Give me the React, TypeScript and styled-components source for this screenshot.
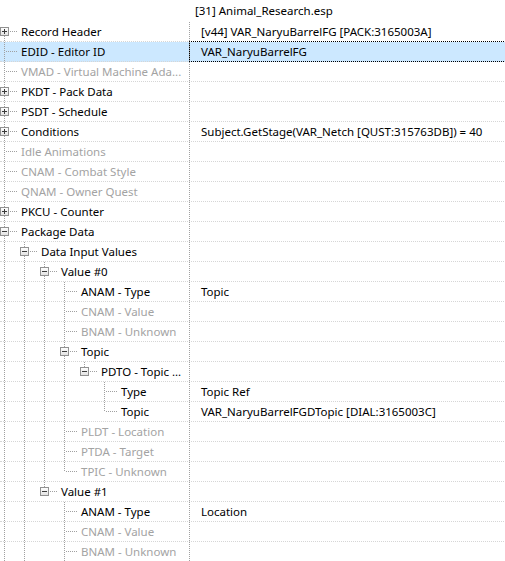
import React from 'react'
import styled, { createGlobalStyle } from 'styled-components'

const GlobalStyle = createGlobalStyle`
  html, body {
    margin: 0;
    padding: 0;
    background: #fff;
    overflow: hidden;
  }
  body {
    font: 11.5px 'Noto Sans', 'Segoe UI', sans-serif;
    color: #000;
  }
`

type Item = {
  label: string
  value?: string
  level: number
  state?: 'open' | 'closed'
  dim?: boolean
  selected?: boolean
}

// flat list of the record tree, in display order
const items: Item[] = [
  { label: 'Record Header', value: '[v44] VAR_NaryuBarrelFG [PACK:3165003A]', level: 0, state: 'closed' },
  { label: 'EDID - Editor ID', value: 'VAR_NaryuBarrelFG', level: 0, selected: true },
  { label: 'VMAD - Virtual Machine Ada...', level: 0, dim: true },
  { label: 'PKDT - Pack Data', level: 0, state: 'closed' },
  { label: 'PSDT - Schedule', level: 0, state: 'closed' },
  { label: 'Conditions', value: 'Subject.GetStage(VAR_Netch [QUST:315763DB]) = 40', level: 0, state: 'closed' },
  { label: 'Idle Animations', level: 0, dim: true },
  { label: 'CNAM - Combat Style', level: 0, dim: true },
  { label: 'QNAM - Owner Quest', level: 0, dim: true },
  { label: 'PKCU - Counter', level: 0, state: 'closed' },
  { label: 'Package Data', level: 0, state: 'open' },
  { label: 'Data Input Values', level: 1, state: 'open' },
  { label: 'Value #0', level: 2, state: 'open' },
  { label: 'ANAM - Type', value: 'Topic', level: 3 },
  { label: 'CNAM - Value', level: 3, dim: true },
  { label: 'BNAM - Unknown', level: 3, dim: true },
  { label: 'Topic', level: 3, state: 'open' },
  { label: 'PDTO - Topic ...', level: 4, state: 'open' },
  { label: 'Type', value: 'Topic Ref', level: 5 },
  { label: 'Topic', value: 'VAR_NaryuBarrelFGDTopic [DIAL:3165003C]', level: 5 },
  { label: 'PLDT - Location', level: 3, dim: true },
  { label: 'PTDA - Target', level: 3, dim: true },
  { label: 'TPIC - Unknown', level: 3, dim: true },
  { label: 'Value #1', level: 2, state: 'open' },
  { label: 'ANAM - Type', value: 'Location', level: 3 },
  { label: 'CNAM - Value', level: 3, dim: true },
  { label: 'BNAM - Unknown', level: 3, dim: true },
  { label: 'Topic', level: 3, dim: true },
  { label: 'PLDT - Location', level: 3, state: 'closed' },
  { label: 'PTDA - Target', level: 3, dim: true },
  { label: 'TPIC - Unknown', level: 3, dim: true },
  { label: 'Data Inputs', level: 1, state: 'closed' },
  { label: 'XNAM - Marker', level: 0 },
  { label: 'Procedure Tree', level: 0, state: 'closed' },
  { label: 'OnBegin', level: 0, state: 'closed' },
  { label: 'OnEnd', level: 0, state: 'closed' },
  { label: 'OnChange', level: 0, state: 'closed' },
]

const hasNext = (i: number) => {
  for (let j = i + 1; j < items.length; j++) {
    if (items[j].level < items[i].level) return false
    if (items[j].level === items[i].level) return true
  }
  return false
}

const ancestorAt = (i: number, level: number) => {
  for (let j = i - 1; j >= 0; j--) {
    if (items[j].level === level) return j
  }
  return -1
}

const LINE = '#a0a0a0'

const Tree = styled.div`
  min-width: 540px;
  user-select: none;
`

const HeaderRow = styled.div`
  display: flex;
  height: 22px;
  line-height: 21px;
`

const HeaderSpacer = styled.div`
  width: 189px;
  flex: none;
`

const HeaderTitle = styled.div`
  padding-left: 6px;
  white-space: nowrap;
`

const Row = styled.div<{ $selected?: boolean }>`
  display: flex;
  height: 20px;
  box-sizing: border-box;
  border-bottom: 1px dotted #d6d6d6;
  background: ${(p) => (p.$selected ? '#cce8ff' : 'transparent')};
`

const NameCell = styled.div`
  width: 189px;
  flex: none;
  display: flex;
  align-items: flex-start;
  white-space: nowrap;
  overflow: visible;
`

const Label = styled.span<{ $dim?: boolean }>`
  padding-left: 1px;
  line-height: 19px;
  color: ${(p) => (p.$dim ? '#a3a3a3' : '#000')};
`

const ValueCell = styled.div<{ $focused?: boolean }>`
  position: relative;
  flex: 1;
  border-left: 1px dotted ${LINE};
  padding-left: 11px;
  line-height: 19px;
  white-space: nowrap;
  &::after {
    content: '';
    display: ${(p) => (p.$focused ? 'block' : 'none')};
    position: absolute;
    top: -1px;
    bottom: -1px;
    left: -1px;
    right: 0;
    border: 1px dotted #000;
  }
`

const Guides = styled.svg`
  flex: none;
  height: 19px;
  overflow: visible;
  display: block;
`

function VLine({ x, y1, y2 }: { x: number; y1: number; y2: number }) {
  return (
    <line
      x1={x}
      x2={x}
      y1={y1}
      y2={y2}
      stroke={LINE}
      strokeDasharray="1 1"
      strokeDashoffset={y1 % 2}
    />
  )
}

function TreeLines({ index }: { index: number }) {
  const item = items[index]
  const L = item.level
  const cx = (k: number) => 20 * k + 4.5
  const boxed = !!item.state
  const next = hasNext(index)
  const parts: React.ReactNode[] = []

  for (let k = 0; k < L; k++) {
    if (hasNext(ancestorAt(index, k))) parts.push(<VLine key={'a' + k} x={cx(k)} y1={0} y2={20} />)
  }
  if (index > 0) parts.push(<VLine key="top" x={cx(L)} y1={0} y2={boxed ? 5 : 10} />)
  if (next) parts.push(<VLine key="bot" x={cx(L)} y1={boxed ? 14 : 10} y2={20} />)

  const hx = 20 * L + (boxed ? 9 : 5)
  parts.push(
    <line
      key="h"
      x1={hx}
      x2={20 * L + 17}
      y1={9.5}
      y2={9.5}
      stroke={LINE}
      strokeDasharray="1 1"
      strokeDashoffset={hx % 2}
    />
  )

  if (boxed) {
    const bx = 20 * L
    parts.push(
      <g key="box">
        <rect x={bx + 0.5} y={5.5} width={8} height={8} fill="url(#btn)" stroke="#919191" />
        <line x1={bx + 2} x2={bx + 7} y1={9.5} y2={9.5} stroke="#3b3b3b" />
        {item.state === 'closed' && <line x1={bx + 4.5} x2={bx + 4.5} y1={7} y2={12} stroke="#3b3b3b" />}
      </g>
    )
  }

  return (
    <Guides width={20 * L + 20} height={19}>
      {parts}
    </Guides>
  )
}

export default function App() {
  return (
    <>
      <GlobalStyle />
      <svg width={0} height={0} style={{ position: 'absolute' }}>
        <defs>
          <linearGradient id="btn" x1="0" y1="0" x2="0" y2="1">
            <stop offset="0" stopColor="#ffffff" />
            <stop offset="1" stopColor="#e2e2e2" />
          </linearGradient>
        </defs>
      </svg>
      <Tree>
        <HeaderRow>
          <HeaderSpacer />
          <HeaderTitle>[31] Animal_Research.esp</HeaderTitle>
        </HeaderRow>
        {items.map((item, i) => (
          <Row key={i} $selected={item.selected}>
            <NameCell>
              <TreeLines index={i} />
              <Label $dim={item.dim}>{item.label}</Label>
            </NameCell>
            <ValueCell $focused={item.selected}>{item.value}</ValueCell>
          </Row>
        ))}
      </Tree>
    </>
  )
}
